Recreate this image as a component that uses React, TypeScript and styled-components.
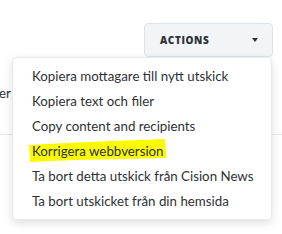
import { type FC } from "react";
import styled, { createGlobalStyle } from "styled-components";

const GlobalStyle = createGlobalStyle`
  html, body {
    margin: 0;
    padding: 0;
    background: #ffffff;
  }
  body {
    font-family: Lato, "Open Sans", Arial, sans-serif;
    color: #333333;
  }
`;

const Page = styled.div`
  position: relative;
  width: 282px;
  height: 234px;
  overflow: hidden;
  background: #ffffff;
`;

const Toolbar = styled.div`
  display: flex;
  justify-content: flex-end;
  padding: 23px 9px 0 0;
`;

const ActionsWrap = styled.div`
  position: relative;
`;

const ActionsButton = styled.button`
  display: flex;
  align-items: center;
  justify-content: space-between;
  box-sizing: border-box;
  width: 129px;
  height: 34px;
  padding: 0 14px 0 15px;
  background: #f2f5f7;
  border: 1px solid #dde4e8;
  border-radius: 4px;
  font-family: "Open Sans", Arial, sans-serif;
  font-size: 10px;
  font-weight: 800;
  letter-spacing: 0.6px;
  color: #2f3336;
  cursor: pointer;
`;

const Caret = styled.span`
  width: 0;
  height: 0;
  border-left: 3.5px solid transparent;
  border-right: 3.5px solid transparent;
  border-top: 4px solid #2f3336;
`;

const Menu = styled.ul`
  position: absolute;
  top: 34px;
  right: 1px;
  z-index: 2;
  box-sizing: border-box;
  width: 260px;
  margin: 0;
  padding: 6px 0 5px;
  list-style: none;
  background: #ffffff;
  border: 1px solid #e8eaec;
  border-radius: 4px;
  box-shadow: 0 3px 10px rgba(0, 0, 0, 0.13);
`;

const MenuItem = styled.li`
  height: 25px;
  line-height: 25px;
  padding-left: 19px;
  font-size: 13.3px;
  color: #2e3133;
  white-space: nowrap;
`;

const Label = styled.span`
  position: relative;
  display: inline-block;
`;

const LabelText = styled.span`
  position: relative;
  z-index: 1;
`;

const Marker = styled.svg`
  position: absolute;
  left: -3px;
  top: -1px;
  width: calc(100% + 6px);
  height: 25px;
  z-index: 0;
`;

const Behind = styled.div`
  padding-top: 26px;
`;

const BehindText = styled.div`
  margin-left: -1px;
  font-size: 13.3px;
  line-height: 20px;
  color: #2e3133;
`;

const BehindRule = styled.div`
  margin-top: 31px;
  height: 1px;
  background: #e6e8ea;
`;

const items = [
  "Kopiera mottagare till nytt utskick",
  "Kopiera text och filer",
  "Copy content and recipients",
  "Korrigera webbversion",
  "Ta bort detta utskick från Cision News",
  "Ta bort utskicket från din hemsida",
];

const App: FC = () => {
  return (
    <Page>
      <GlobalStyle />
      <Toolbar>
        <ActionsWrap>
          <ActionsButton>
            ACTIONS
            <Caret />
          </ActionsButton>
          <Menu>
            {items.map((label, i) => (
              <MenuItem key={label}>
                <Label>
                  {i === 3 && (
                    <Marker viewBox="0 0 146 25" preserveAspectRatio="none">
                      <polygon
                        points="0,7 40,5 90,3 144,1 146,20 100,21 50,22 1,24"
                        fill="#fbfb00"
                      />
                    </Marker>
                  )}
                  <LabelText>{label}</LabelText>
                </Label>
              </MenuItem>
            ))}
          </Menu>
        </ActionsWrap>
      </Toolbar>
      <Behind>
        <BehindText>er</BehindText>
        <BehindRule />
      </Behind>
    </Page>
  );
};

export default App;
